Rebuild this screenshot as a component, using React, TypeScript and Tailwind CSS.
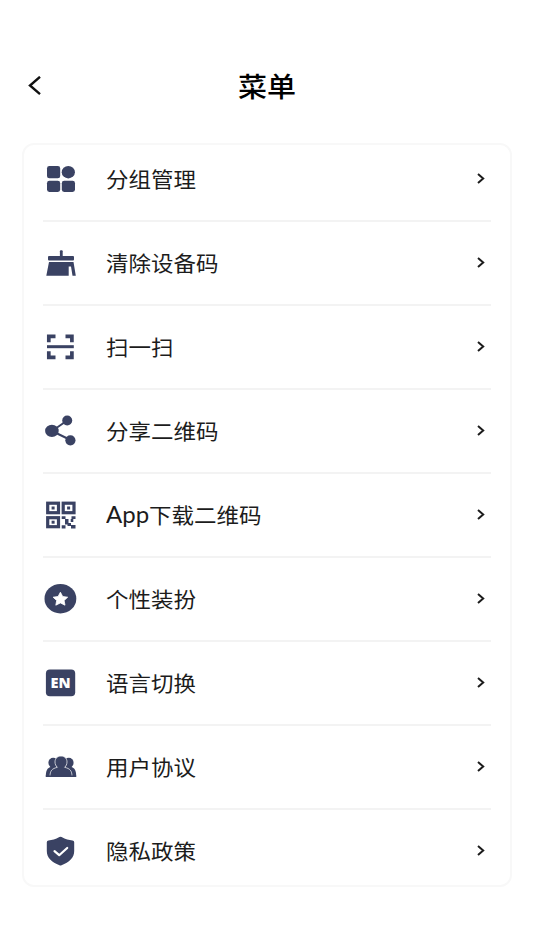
import React from 'react';

const ink = '#3a4263';

const GroupIcon = () => (
  <>
    <rect x="5" y="5" width="13.2" height="12.3" rx="2.4" />
    <ellipse cx="26.3" cy="11.2" rx="6.6" ry="6.2" />
    <rect x="5" y="19.8" width="13.2" height="11.2" rx="2.4" />
    <rect x="19.8" y="19.8" width="13.2" height="11.2" rx="2.4" />
  </>
);

const BroomIcon = () => (
  <>
    <rect x="17.9" y="5.3" width="2.8" height="7" rx="1" />
    <rect x="6" y="11" width="26" height="4.5" rx="1" />
    <path d="M7 17h24.5l2.3 13.8h-3.3l-1.5-9.3h-2.3v9.3H4.3z" />
  </>
);

const ScanIcon = () => (
  <>
    <path
      d="M6.8 13.3V7.3h6.7M23.5 7.3h6.4v6M29.9 22.2v6.2h-6.4M13.5 28.4H6.8v-6.2"
      fill="none"
      stroke={ink}
      strokeWidth="3.7"
    />
    <rect x="5" y="16.2" width="26.8" height="3" />
  </>
);

const ShareIcon = () => (
  <>
    <path d="M25.2 7.5L10 18l18.5 9" fill="none" stroke={ink} strokeWidth="2" />
    <ellipse cx="9.9" cy="17.9" rx="6.8" ry="6.2" />
    <circle cx="25.2" cy="7.5" r="5" />
    <circle cx="28.4" cy="27.3" r="5.1" />
  </>
);

const QrIcon = () => (
  <>
    <g fill="none" stroke={ink} strokeWidth="3.2">
      <rect x="5.7" y="6.2" width="10.8" height="9.5" />
      <rect x="21.2" y="6.2" width="10.8" height="9.5" />
      <rect x="5.7" y="20.7" width="10.8" height="9" />
    </g>
    <rect x="9.6" y="9.5" width="3" height="3" />
    <rect x="25.1" y="9.5" width="3" height="3" />
    <rect x="9.6" y="23.7" width="3" height="3" />
    <path d="M19.7 19.2h3.8V22h-3.8zM29.5 19.2h4V22h-2.200v3h-2.600v-3h.8zM23 22h3.500v4h2.500v3h-3.500v-1.500H23zM19.700 28.200h3.800v3.300h-3.800zM29 28h4.500v3.500H29z" />
  </>
);

const StarIcon = () => (
  <>
    <ellipse cx="18.4" cy="17.7" rx="15.9" ry="14.7" />
    <path
      d="M18.4 11.2L20.7 15.5L25.7 16.2L22.1 19.5L23 24.2L18.4 21.9L13.8 24.2L14.7 19.5L11.1 16.2L16.1 15.5z"
      fill="#fff"
      stroke="#fff"
      strokeWidth=".8"
      strokeLinejoin="round"
    />
  </>
);

const LanguageIcon = () => (
  <>
    <rect x="3.9" y="4.5" width="29.3" height="26.7" rx="4" />
    <text
      x="18.6"
      y="22.8"
      fill="#fff"
      fontSize="13.5"
      fontWeight="800"
      textAnchor="middle"
      textLength="20"
      lengthAdjust="spacingAndGlyphs"
      className="font-['Open_Sans',sans-serif]"
    >
      EN
    </text>
  </>
);

const UsersIcon = () => (
  <>
    <ellipse cx="11.2" cy="13.8" rx="4.8" ry="5" />
    <ellipse cx="26.8" cy="13.8" rx="4.8" ry="5" />
    <path d="M3.8 27.5c0-5.8 1.2-8.5 5.5-9.700h19.400c4.300 1.200 5.500 3.900 5.500 9.700z" />
    <path
      d="M19 7.1c3.700 0 6 2.500 6 5.800 0 2.300-.9 4.200-2.400 5.400 5.400 1.300 7.400 3.400 7.400 9.200H8c0-5.800 2-7.900 7.400-9.200-1.500-1.200-2.400-3.100-2.400-5.400 0-3.300 2.300-5.800 6-5.800z"
      stroke="#fff"
      strokeWidth=".7"
    />
    <rect x="3.800" y="26.400" width="30.400" height="1.600" />
  </>
);

const ShieldIcon = () => (
  <>
    <path d="M17.4 4.1q1.100-.7 2.200 0C23.500 6.500 27 7.300 30.500 7.500q1.700.1 1.700 1.700V18c0 6.800-5 11.300-12.700 14.200q-1 .4-2 0C9.800 29.300 4.800 24.800 4.800 18V9.200q0-1.600 1.700-1.700C10 7.300 13.500 6.500 17.400 4.100z" />
    <path
      d="M12.5 18.2l4.7 4 8-7.2"
      fill="none"
      stroke="#fff"
      strokeWidth="2.2"
      strokeLinecap="round"
      strokeLinejoin="round"
    />
  </>
);

const items = [
  { label: '分组管理', Icon: GroupIcon },
  { label: '清除设备码', Icon: BroomIcon },
  { label: '扫一扫', Icon: ScanIcon },
  { label: '分享二维码', Icon: ShareIcon },
  { prefix: 'App', label: '下载二维码', Icon: QrIcon },
  { label: '个性装扮', Icon: StarIcon },
  { label: '语言切换', Icon: LanguageIcon },
  { label: '用户协议', Icon: UsersIcon },
  { label: '隐私政策', Icon: ShieldIcon },
];

export default function App() {
  return (
    <div className="h-[950px] w-[534px] overflow-hidden bg-white pt-[62px] font-['Noto_Sans_CJK_SC',sans-serif] text-[#1c1c1c]">
      <header className="grid h-12 grid-cols-[1fr_auto_1fr] items-center pl-7">
        <button aria-label="返回" className="w-fit">
          <svg width="14" height="20" viewBox="0 0 14 20" fill="none" stroke="#111" strokeWidth="2.4">
            <path d="M12 .8L2 9.5l10 8.7" />
          </svg>
        </button>
        <h1 className="mr-7 mb-0.5 scale-y-[0.94] text-[29px] leading-none font-medium text-black">菜单</h1>
      </header>

      <main className="mt-[33px] ml-[22px] h-[744px] w-[490px] overflow-hidden rounded-xl border-2 border-[#f8f8f8] px-[19px]">
        <ul className="-mt-[7px]">
          {items.map(({ prefix, label, Icon }) => (
            <li
              key={label}
              className="flex h-21 items-center border-b-2 border-[#f3f3f3] pb-0.5 last:border-transparent"
            >
              <svg width="36" height="35" viewBox="0 0 36 35" fill={ink} className="-ml-px shrink-0">
                <Icon />
              </svg>
              <span className="ml-7 flex-1 scale-y-[0.93] text-[22.5px] leading-none">
                {prefix && <span className="font-['Lato',sans-serif] text-2xl leading-[0]">{prefix}</span>}
                {label}
              </span>
              <svg
                width="8"
                height="11"
                viewBox="0 0 8 11"
                fill="none"
                stroke="#1c1c1c"
                strokeWidth="2"
                className="mr-[6px]"
              >
                <path d="M1 1l5.2 4.5L1 10" />
              </svg>
            </li>
          ))}
        </ul>
      </main>
    </div>
  );
}
